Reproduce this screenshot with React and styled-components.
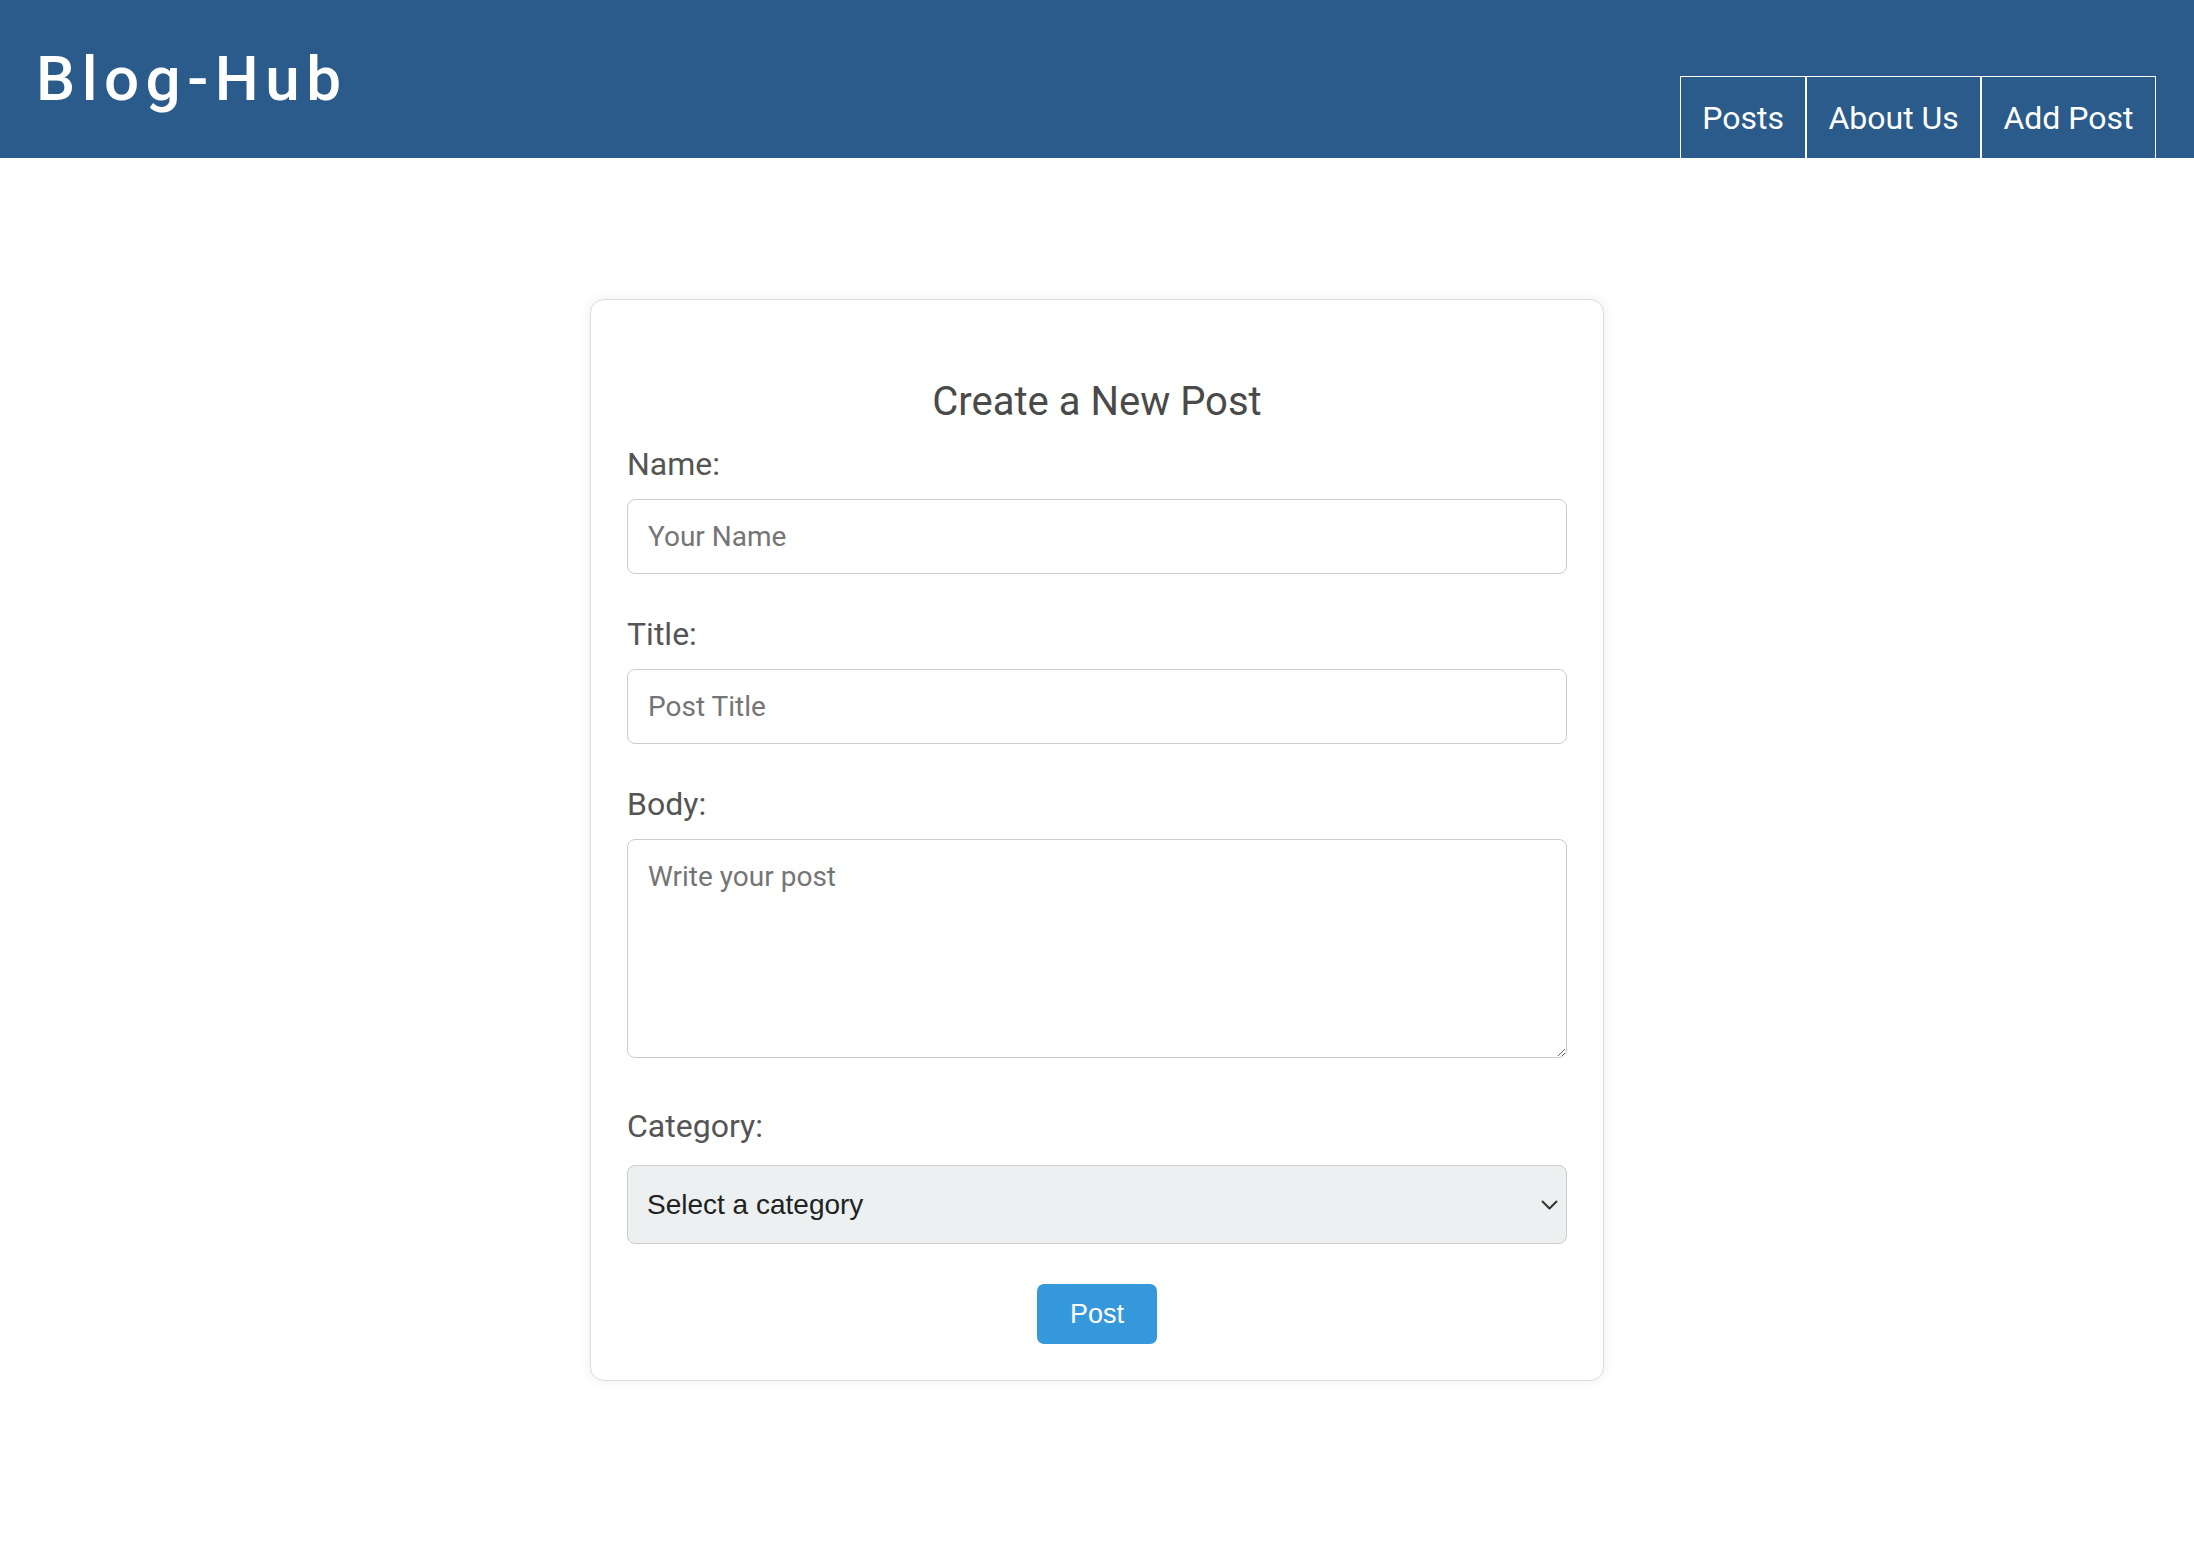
import React from "react";
import styled, { createGlobalStyle } from "styled-components";

const GlobalStyle = createGlobalStyle`
  * { box-sizing: border-box; }
  html, body { margin: 0; padding: 0; background: #ffffff; }
  body { font-family: Roboto, "Noto Sans", Arial, sans-serif; color: #333; }
`;

const Header = styled.header`
  height: 158px;
  background: #2a5b8a;
  display: flex;
  justify-content: space-between;
  align-items: flex-start;
  padding: 0 38px 0 36px;
`;

const Logo = styled.h1`
  margin: 42px 0 0;
  font-family: Roboto, Arial, sans-serif;
  font-size: 62px;
  font-weight: 500;
  letter-spacing: 6.5px;
  line-height: normal;
  color: #ffffff;
`;

const Nav = styled.nav`
  align-self: flex-end;
  display: flex;
  margin-top: 76px;
  height: 82px;
`;

const NavLink = styled.a`
  display: block;
  padding: 22px 21.5px 0;
  border: 1.5px solid #ffffff;
  border-bottom: none;
  margin-left: ${(p) => (p.$first ? "0" : "-0.5px")};
  font-family: Roboto, Arial, sans-serif;
  font-size: 32px;
  line-height: normal;
  color: #ffffff;
  text-decoration: none;
  cursor: pointer;
`;

const Card = styled.main`
  width: 1014px;
  margin: 141px auto 100px;
  padding: 36px 36px 36px;
  border: 1px solid #dcdcdc;
  border-radius: 14px;
  box-shadow: 0 0 12px rgba(0, 0, 0, 0.08);
  background: #fff;
`;

const Heading = styled.h2`
  margin: 42px 0 20px;
  text-align: center;
  font-family: Roboto, Arial, sans-serif;
  font-size: 40px;
  font-weight: 400;
  line-height: normal;
  color: #4a4a4a;
`;

const Form = styled.form`
  display: flex;
  flex-direction: column;
`;

const Label = styled.label`
  display: block;
  font-family: Roboto, Arial, sans-serif;
  font-size: 32px;
  line-height: normal;
  color: #555555;
  margin: 0 0 ${(p) => p.$bottom || "16px"};
`;

const fieldBase = `
  display: block;
  width: 100%;
  border: 1px solid #cccccc;
  border-radius: 8px;
  font-family: Roboto, Arial, sans-serif;
  font-size: 28px;
  line-height: normal;
  color: #333;
  background: #ffffff;
  outline: none;
  &::placeholder { color: #757575; }
`;

const Input = styled.input`
  ${fieldBase}
  height: 75px;
  padding: 0 20px;
  margin-bottom: 41px;
`;

const TextArea = styled.textarea`
  ${fieldBase}
  height: 219px;
  padding: 20px;
  resize: vertical;
  margin-bottom: 49px;
`;

const SelectWrap = styled.div`
  position: relative;
  margin-bottom: 40px;
`;

const Select = styled.select`
  display: block;
  width: 100%;
  height: 79px;
  padding: 0 50px 0 19px;
  border: 1px solid #cccccc;
  border-radius: 8px;
  background: #ecf0f1;
  font-family: "Liberation Sans", Arial, sans-serif;
  font-size: 28px;
  color: #222222;
  appearance: none;
  -webkit-appearance: none;
  outline: none;
`;

const Chevron = styled.svg`
  position: absolute;
  right: 9px;
  top: 35px;
  width: 17px;
  height: 10px;
  pointer-events: none;
`;

const ButtonRow = styled.div`
  display: flex;
  justify-content: center;
`;

const Button = styled.button`
  width: 120px;
  height: 60px;
  border: none;
  border-radius: 7px;
  background: #3498db;
  color: #ffffff;
  font-family: "Liberation Sans", Arial, sans-serif;
  font-size: 27px;
  cursor: pointer;
`;

export default function App() {
  return (
    <>
      <GlobalStyle />
      <Header>
        <Logo>Blog-Hub</Logo>
        <Nav>
          <NavLink $first>Posts</NavLink>
          <NavLink>About Us</NavLink>
          <NavLink>Add Post</NavLink>
        </Nav>
      </Header>
      <Card>
        <Heading>Create a New Post</Heading>
        <Form onSubmit={(e) => e.preventDefault()}>
          <Label htmlFor="name">Name:</Label>
          <Input id="name" type="text" placeholder="Your Name" />
          <Label htmlFor="title">Title:</Label>
          <Input id="title" type="text" placeholder="Post Title" />
          <Label htmlFor="body">Body:</Label>
          <TextArea id="body" placeholder="Write your post" />
          <Label htmlFor="category" $bottom="20px">Category:</Label>
          <SelectWrap>
            <Select id="category" defaultValue="">
              <option value="">Select a category</option>
              <option value="tech">Technology</option>
              <option value="life">Lifestyle</option>
              <option value="travel">Travel</option>
            </Select>
            <Chevron viewBox="0 0 17 10" fill="none">
              <path d="M1.5 1.5 L8.5 8.5 L15.5 1.5" stroke="#333" strokeWidth="2" strokeLinecap="round" strokeLinejoin="round" />
            </Chevron>
          </SelectWrap>
          <ButtonRow>
            <Button type="submit">Post</Button>
          </ButtonRow>
        </Form>
      </Card>
    </>
  );
}
